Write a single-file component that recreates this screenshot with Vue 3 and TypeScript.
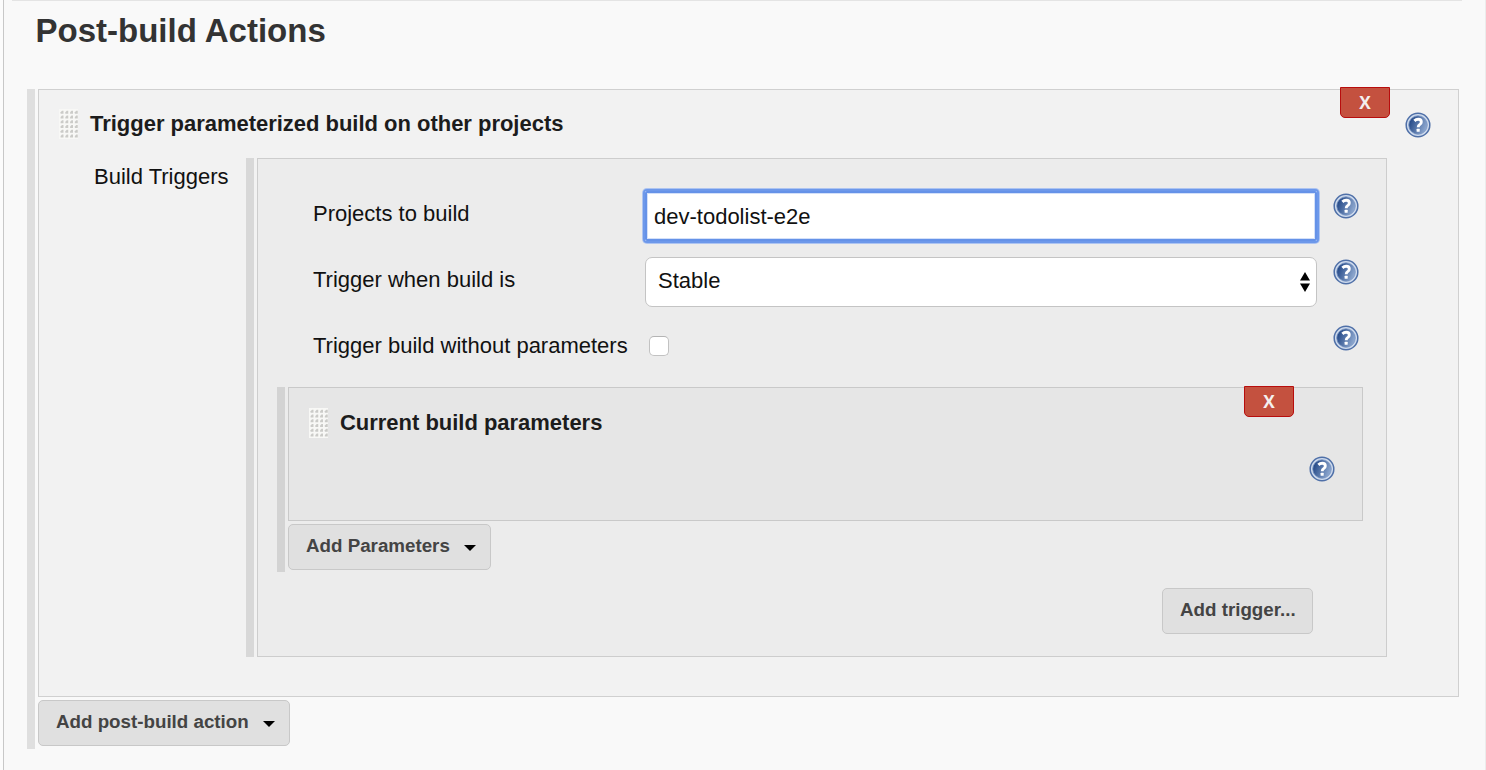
<script setup lang="ts">
import { ref, h } from 'vue'

const projects = ref('dev-todolist-e2e')
const withoutParameters = ref(false)

const HelpIcon = () =>
  h('svg', { viewBox: '0 0 26 26', width: 26, height: 26, role: 'img', 'aria-label': 'Help' }, [
    h('defs', [
      h('linearGradient', { id: 'helpFill', x1: '0', y1: '0.3', x2: '1', y2: '0.7' }, [
        h('stop', { offset: '0.1', 'stop-color': '#2b4f8c' }),
        h('stop', { offset: '0.95', 'stop-color': '#8fa9d0' }),
      ]),
    ]),
    h('circle', { cx: 13, cy: 13, r: 11.8, fill: '#d0dcee', stroke: '#4f70a8', 'stroke-width': 1.5 }),
    h('circle', { cx: 13, cy: 13, r: 9.3, fill: 'url(#helpFill)', stroke: '#7b97c4', 'stroke-width': 0.8 }),
    h('path', {
      d: 'M9.4 8.9 Q11.1 7.2 13.2 7.2 Q16.3 7.2 16.3 9.9 Q16.3 11.4 14.9 12.4 Q13.2 13.5 13.2 15.2',
      fill: 'none',
      stroke: '#fff',
      'stroke-width': 2.9,
    }),
    h('rect', { x: 11.6, y: 16.8, width: 3.1, height: 2.9, rx: 0.5, fill: '#fff' }),
  ])

const Grip = () =>
  h('svg', { viewBox: '0 0 19 30', width: 19, height: 30 }, [
    h('rect', { width: 19, height: 30, fill: '#f8f8f6' }),
    ...Array.from({ length: 24 }, (_, i) => {
      const x = 1.6 + (i % 4) * 4.75
      const y = 1.8 + Math.floor(i / 4) * 4.75
      return h('path', { d: `M${x + 2.9} ${y} V${y + 2.9} H${x} V${y + 1.4} L${x + 1.4} ${y} Z`, fill: '#cbcbc8' })
    }),
  ])
</script>

<template>
  <main class="page">
    <h1>Post-build Actions</h1>
    <section class="outer">
      <div class="card action">
        <button class="remove"><span>X</span></button>
        <header class="title"><Grip /><b>Trigger parameterized build on other projects</b></header>
        <span class="help action-help"><HelpIcon /></span>
        <div class="triggers">
          <span class="section-label">Build Triggers</span>
          <div class="bar-group">
            <div class="card trigger">
              <div class="row">
                <label for="projects">Projects to build</label>
                <input id="projects" v-model="projects" class="text" type="text" />
                <span class="help"><HelpIcon /></span>
              </div>
              <div class="row">
                <label>Trigger when build is</label>
                <div class="select" role="combobox">
                  <span>Stable</span>
                  <svg width="10" height="20" viewBox="0 0 10 20"><path d="M5 0 10 8.4H0zM0 11.6H10L5 20z" /></svg>
                </div>
                <span class="help"><HelpIcon /></span>
              </div>
              <div class="row">
                <label for="without">Trigger build without parameters</label>
                <div class="check-cell"><input id="without" v-model="withoutParameters" class="check" type="checkbox" /></div>
                <span class="help"><HelpIcon /></span>
              </div>
              <div class="params">
                <div class="card param">
                  <button class="remove"><span>X</span></button>
                  <header class="title"><Grip /><b>Current build parameters</b></header>
                  <span class="help param-help"><HelpIcon /></span>
                </div>
                <button class="btn add-params"><span>Add Parameters</span><i class="caret"></i></button>
              </div>
              <button class="btn add-trigger">Add trigger...</button>
            </div>
          </div>
        </div>
      </div>
      <button class="btn add-action"><span>Add post-build action</span><i class="caret"></i></button>
    </section>
  </main>
</template>

<style>
body { background: #fcfcfc; }
</style>

<style scoped>
* { box-sizing: border-box; }
.page {
  position: relative;
  width: 1483px;
  height: 770px;
  margin-left: 3px;
  padding-left: 23px;
  overflow: hidden;
  background: #f9f9f9;
  border-left: 1px solid #c8c8c8;
  border-right: 1px solid #ececec;
  font: 22px/26px "Liberation Sans", Arial, sans-serif;
  color: #111;
}
.page::before {
  content: "";
  position: absolute;
  top: 0;
  left: 8px;
  width: 1450px;
  height: 1px;
  background: #e4e4e4;
}
h1 {
  margin: 0 0 0 8.5px;
  padding-top: 11px;
  height: 89px;
  font-size: 33px;
  line-height: 40px;
  color: #333;
}
.outer {
  width: 1431px;
  height: 660px;
  padding-left: 3px;
  border-left: 8px solid #dfdfdf;
}
.card { position: relative; border: 1px solid #d0d0d0; }
.action { width: 1421px; height: 608px; padding-top: 19px; background: #f2f2f2; }
.title { display: flex; align-items: center; gap: 12px; height: 30px; padding-left: 20px; color: #1c1c1c; }
.title b { line-height: 26px; letter-spacing: -0.02px; }
.remove {
  position: absolute;
  top: -3px;
  width: 50px;
  height: 31px;
  padding: 0;
  border: 1px solid #b80d0d;
  border-radius: 0 0 5px 5px;
  background: #c4513f;
  color: #f4f0ef;
  font: bold 18.5px/26px "Open Sans", sans-serif;
}
.remove span { display: block; margin-top: -2px; transform: scaleX(0.93); }
.action > .remove { right: 68px; }
.help { display: block; width: 26px; height: 26px; }
.help svg { display: block; }
.action-help { position: absolute; top: 22px; right: 27px; }
.triggers { display: flex; margin-top: 19px; }
.section-label { width: 207px; padding: 6px 0 0 55px; white-space: nowrap; }
.bar-group { width: 1141px; height: 499px; padding-left: 3px; border-left: 8px solid #d8d8d8; }
.trigger { width: 1130px; height: 499px; padding: 30px 0 0 19px; background: #ececec; border-color: #cdcdcd; }
.row { display: grid; grid-template-columns: 332px 672px 26px; height: 66px; padding-left: 36px; }
.row label { padding-top: 12px; white-space: nowrap; }
.row .help { margin: 4px 0 0 16px; }
.text {
  width: 672px;
  height: 50px;
  margin-top: 2px;
  padding: 2px 0 0 9px;
  border: 0;
  border-radius: 2px;
  outline: 0;
  background: #fff;
  box-shadow: 0 0 0 2px #6d98ea, 0 0 0 3px #adc4f1, inset 0 0 0 2px #6592e8, inset 0 0 0 3px #d3e0f9;
  font: inherit;
  color: #111;
}
.select {
  display: flex;
  justify-content: space-between;
  align-items: center;
  width: 672px;
  height: 50px;
  margin-top: 2px;
  padding: 0 6px 2px 12px;
  border: 1px solid #c4c4c4;
  border-radius: 7px;
  background: #fff;
}
.select svg { margin-top: 2px; }
.check-cell { padding: 15px 0 0 4px; }
.check {
  display: block;
  appearance: none;
  width: 20px;
  height: 20px;
  margin: 0;
  border: 1px solid #c2c2c2;
  border-top-color: #b4b4b4;
  border-radius: 5px;
  background: #fff;
}
.params { width: 1086px; height: 185px; border-left: 8px solid #d3d3d3; padding-left: 3px; }
.param { width: 1075px; height: 134px; padding-top: 20px; background: #e6e6e6; border-color: #c9c9c9; }
.param > .remove { top: -2px; right: 68px; }
.param-help { position: absolute; top: 68px; right: 27px; }
.btn {
  display: flex;
  align-items: center;
  height: 46px;
  padding: 0 0 2px 17px;
  border: 1px solid #c8c8c8;
  border-radius: 5px;
  background: #e0e0e0;
  color: #444;
  font: bold 18.75px/22px "Liberation Sans", Arial, sans-serif;
  white-space: nowrap;
}
.btn span { flex: none; }
.caret {
  margin: 3px 0 0 auto;
  border: 6px solid transparent;
  border-top-color: #000;
  border-bottom: 0;
}
.add-params { width: 203px; margin-top: 3px; padding-right: 14px; }
.add-trigger { width: 151px; margin: 16px 0 0 885px; }
.add-action { width: 252px; margin-top: 3px; padding-right: 14px; }
</style>
